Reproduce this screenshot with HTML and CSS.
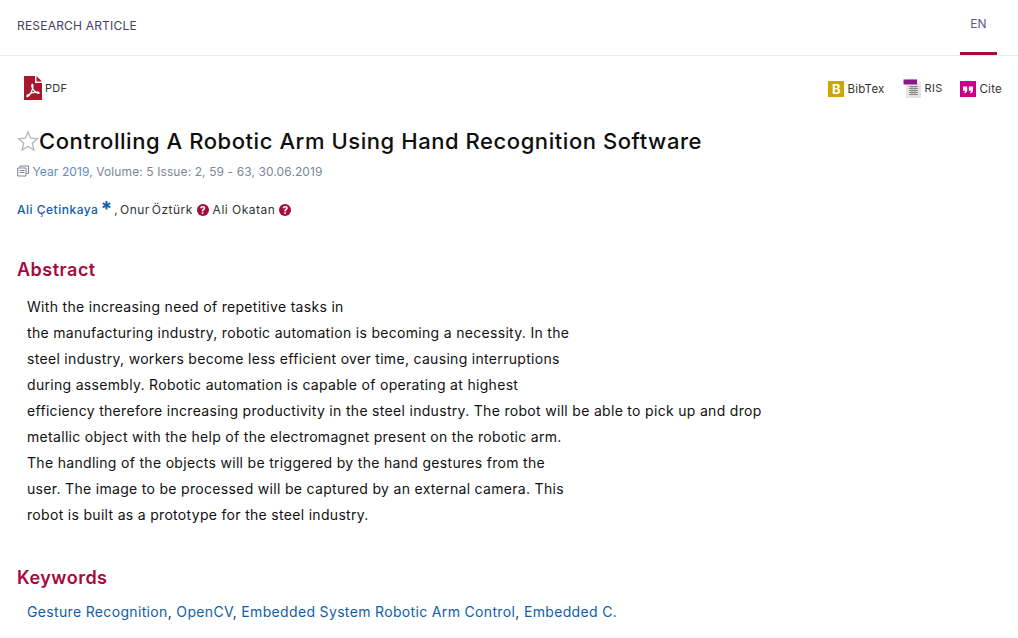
FILE: index.html
```html
<!DOCTYPE html>
<html lang="en">
<head>
    <meta charset="UTF-8">
    <meta name="viewport" content="width=device-width, initial-scale=1.0">
    <title>Controlling A Robotic Arm Using Hand Recognition Software</title>
    <link rel="stylesheet" href="styles.css">
</head>
<body>
    <!-- Top bar -->
    <header class="topbar">
        <span class="article-type">RESEARCH ARTICLE</span>
        <a class="lang-tab" href="#">EN</a>
    </header>

    <main class="article">
        <!-- Downloads -->
        <div class="tools">
            <a class="tool tool-pdf" href="#">
                <svg class="pdf-icon" width="18" height="24" viewBox="0 0 18 24">
                    <path d="M0 0H11V7H18V24H0Z" fill="#a8192e"/>
                    <path d="M12.5 0L18 5.5H12.5Z" fill="#a8192e"/>
                    <path d="M8 8.5C9 8 9.3 9.5 8.6 12.5C7.8 15.5 5.5 19.5 3.6 20.6C2.6 21 2.4 19.9 3.6 19C6 17.4 10.5 15.8 14 16.2C15.6 16.5 15.3 17.8 13.8 17.3C11.5 16.5 9 13.5 8 11C7.6 9.8 7.6 8.9 8 8.5Z" fill="none" stroke="#fff" stroke-width="1.2"/>
                </svg>
                <span>PDF</span>
            </a>
            <div class="tools-right">
                <a class="tool tool-bib" href="#">
                    <span class="square square-gold">B</span>
                    <span class="tool-label">BibTex</span>
                </a>
                <a class="tool tool-ris" href="#">
                    <svg class="ris-icon" width="19" height="20" viewBox="0 0 19 20">
                        <path d="M3 1H14L18 5V20H3Z" fill="#e4e4e4"/>
                        <path d="M14 1L18 5H14Z" fill="#f7f7f7"/>
                        <rect x="0.500" y="1.500" width="13.500" height="5" fill="#8a1a8c"/>
                        <path d="M6 8.500H15M6 10.500H15M6 12.500H15M6 14.500H15M6 16.500H15M9 8V17M12 8V17" stroke="#8b8b8b" stroke-width="1"/>
                    </svg>
                    <span>RIS</span>
                </a>
                <a class="tool tool-cite" href="#">
                    <span class="square square-pink">
                        <svg width="16" height="16" viewBox="0 0 16 16">
                            <path d="M3 5.500H7.200V9.500C7.200 11 6.200 12 4.500 12.300V10.800C5 10.700 5.300 10.300 5.300 9.700H3ZM8.800 5.500H13V9.500C13 11 12 12 10.300 12.300V10.800C10.800 10.700 11.100 10.300 11.100 9.700H8.800Z" fill="#fff"/>
                        </svg>
                    </span>
                    <span class="tool-label">Cite</span>
                </a>
            </div>
        </div>

        <!-- Title -->
        <h1 class="title">
            <svg class="star" width="22" height="22" viewBox="0 0 22 22">
                <path d="M11 1.800L13.700 8.200L20.500 8.800L15.300 13.300L16.900 20L11 16.400L5.100 20L6.700 13.300L1.500 8.800L8.300 8.200Z" fill="none" stroke="#b5b5b5" stroke-width="1.300"/>
            </svg>
            Controlling A Robotic Arm Using Hand Recognition Software
        </h1>

        <p class="issue">
            <svg class="issue-icon" width="12" height="12" viewBox="0 0 12 12">
                <path d="M3 2.500V1H11.500V8.500H9.500M0.700 3H9V11H0.700ZM2.500 5.500H7.500M2.500 7.500H7.500" fill="none" stroke="#7b8794" stroke-width="1"/>
            </svg>
            <a class="year" href="#">Year 2019</a>, Volume: 5 Issue: 2, 59 - 63, 30.06.2019
        </p>

        <p class="authors">
            <a href="#">Ali Çetinkaya</a><span class="asterisk">*</span><span class="co-author">, Onur Öztürk</span>
            <span class="q-mark">?</span>
            Ali Okatan
            <span class="q-mark">?</span>
        </p>

        <section class="abstract">
            <h2>Abstract</h2>
            <p class="abstract-text">
                With the increasing need of repetitive tasks in<br>
                the manufacturing industry, robotic automation is becoming a necessity. In the<br>
                steel industry, workers become less efficient over time, causing interruptions<br>
                during assembly. Robotic automation is capable of operating at highest<br>
                efficiency therefore increasing productivity in the steel industry. The robot will be able to pick up and drop<br>
                metallic object with the help of the electromagnet present on the robotic arm.<br>
                The handling of the objects will be triggered by the hand gestures from the<br>
                user. The image to be processed will be captured by an external camera. This<br>
                robot is built as a prototype for the steel industry.
            </p>
        </section>

        <section class="keywords">
            <h2>Keywords</h2>
            <p class="keyword-list">
                <a href="#">Gesture Recognition</a>, <a href="#">OpenCV</a>, <a href="#">Embedded System Robotic Arm Control</a>, <a href="#">Embedded C.</a>
            </p>
        </section>
    </main>
</body>
</html>
```

FILE: styles.css
```css
/* Page */
body {
    margin: 0;
    height: 638px;
    overflow: hidden;
    background: #ffffff;
    color: #111111;
    font-family: "Inter", "Open Sans", sans-serif;
}
a {
    color: #0f5ea8;
    text-decoration: none;
}
p, h1, h2 {
    margin: 0;
}

/* Top bar */
.topbar {
    display: flex;
    justify-content: space-between;
    height: 55px;
    border-bottom: 1px solid #e9e9e9;
    padding: 0 21px 0 17px;
}
.article-type {
    margin-top: 18px;
    font-size: 12px;
    line-height: 15px;
    letter-spacing: 0.2px;
    color: #44405f;
}
.lang-tab {
    width: 37px;
    height: 40px;
    margin-top: 15px;
    padding-top: 1px;
    box-sizing: border-box;
    border-bottom: 3px solid #a50a3f;
    text-align: center;
    font-size: 12px;
    line-height: 15px;
    color: #5d5a8c;
}

.article {
    padding: 0 16px 0 17px;
}

/* Tools */
.tools {
    display: flex;
    justify-content: space-between;
    padding: 20px 0 0 7px;
    height: 40px;
}
.tool {
    display: flex;
    align-items: center;
    gap: 3px;
    color: #333333;
    font-size: 11px;
    letter-spacing: 0.25px;
    height: 24px;
}
.tools-right {
    display: flex;
    gap: 18px;
    padding-top: 1px;
}
.tool-label {
    padding-bottom: 1px;
    font-size: 11.5px;
}
.tool-ris {
    padding-bottom: 2px;
    height: 22px;
}
.square {
    display: flex;
    align-items: center;
    justify-content: center;
    width: 16px;
    height: 16px;
    color: #ffffff;
    font-size: 13px;
    font-weight: 700;
}
.square-gold {
    background: #cda400;
}
.square-pink {
    background: #c9008a;
}

/* Title */
.title {
    display: flex;
    align-items: center;
    font-size: 22px;
    line-height: 30px;
    font-weight: 500;
    letter-spacing: 0.56px;
    color: #0e0e0e;
    margin-top: 10px;
}
.star {
    flex: none;
}

.issue {
    margin-top: 6px;
    font-size: 12px;
    line-height: 20px;
    letter-spacing: 0.1px;
    color: #7b8794;
}
.issue-icon {
    vertical-align: -1px;
}
.year {
    color: #5f8db8;
}

.authors {
    margin-top: 18px;
    height: 20px;
    font-size: 12px;
    line-height: 20px;
    letter-spacing: 0.5px;
    color: #333333;
}
.authors a {
    color: #0f5ea8;
    font-weight: 500;
}
.co-author {
    word-spacing: -2px;
}
.asterisk {
    margin: 0 2px;
    color: #0f5ea8;
    font-size: 21px;
    line-height: 14px;
    font-weight: 700;
    letter-spacing: 0;
    vertical-align: -3px;
}
.q-mark {
    display: inline-block;
    width: 12px;
    height: 12px;
    border-radius: 50%;
    background: #a50a3f;
    color: #ffffff;
    font-size: 10px;
    font-weight: 700;
    line-height: 12px;
    letter-spacing: 0;
    text-align: center;
}

/* Sections */
.abstract {
    margin-top: 38px;
}
h2 {
    font-size: 18px;
    line-height: 24px;
    font-weight: 600;
    letter-spacing: 0.5px;
    color: #a50a3f;
}
.abstract-text {
    margin-top: 12px;
    padding-left: 10px;
    font-size: 14px;
    line-height: 26px;
    letter-spacing: 0.31px;
    color: #111111;
}
.keywords {
    margin-top: 38px;
}
.keyword-list {
    margin-top: 9px;
    padding-left: 10px;
    font-size: 14px;
    line-height: 26px;
    letter-spacing: 0.34px;
    color: #333333;
}
```
